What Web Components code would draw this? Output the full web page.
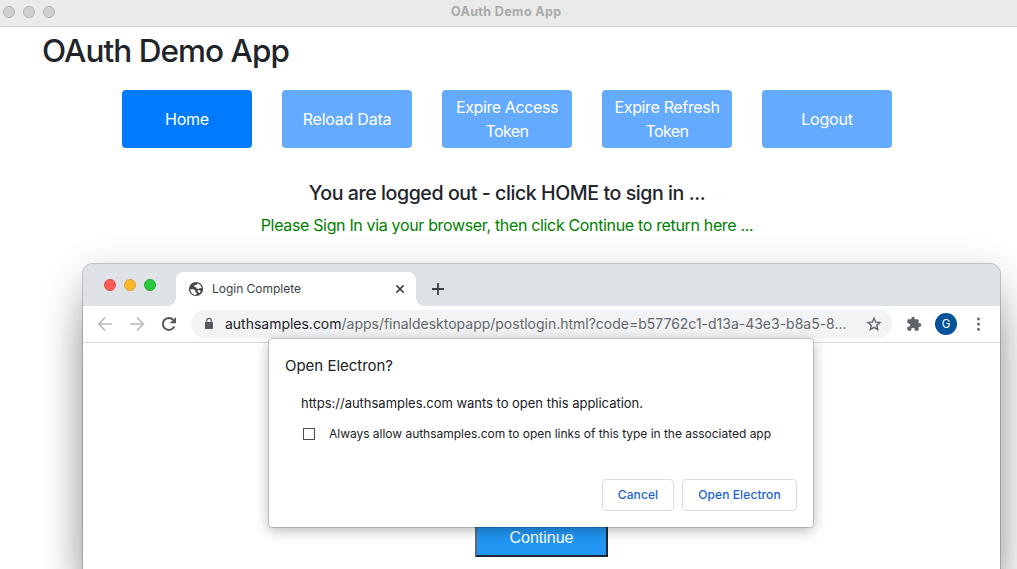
<!DOCTYPE html>
<html lang="en">
<head>
<meta charset="utf-8">
<title>OAuth Demo App</title>
<style>
html,body{margin:0;height:100%;overflow:hidden;background:#fff}
body{font-family:Inter,"Liberation Sans",sans-serif;color:#212529;position:relative}
</style>
</head>
<body>
<demo-app></demo-app>
<browser-window></browser-window>

<script>
const define = (name, html) => customElements.define(name, class extends HTMLElement {
  constructor() {
    super();
    const t = document.createElement('template');
    t.innerHTML = html;
    this.attachShadow({ mode: 'open' }).append(t.content.cloneNode(true));
  }
});

define('title-bar', `<style>
:host{display:flex;height:26px;background:#eaeaea;border-bottom:1px solid #d2d2d2;align-items:center;font-size:12.5px;font-weight:700;color:#a9a9a9}
.dots{display:flex;gap:8px;padding-left:3px;width:104px;box-sizing:border-box;align-self:flex-start;padding-top:6px}
i{width:12px;height:12px;box-sizing:border-box;border-radius:50%;background:#d0d0d0;border:1px solid #b4b4b4}
.name{flex:1;padding-left:347px;padding-bottom:3px;line-height:16px}
</style><div class="dots"><i></i><i></i><i></i></div><div class="name"><slot></slot></div>`);

define('nav-button', `<style>
:host{display:flex;width:130px;height:58px;border-radius:4px;background:#64aaff;color:#fff;font-size:16px;line-height:24px;flex-direction:column;align-items:center;justify-content:center}
:host([active]){background:#007bff}
</style><slot></slot>`);

define('demo-app', `<style>
:host{display:block}
h1{margin:0;padding:5px 0 0 42px;font-size:31.500px;line-height:38px;font-weight:500}
nav{display:flex;gap:30px;padding:20px 0 0 122px}
.status{padding:33px 3px 0 0;text-align:center}
.main{font-size:19.600px;font-weight:500;line-height:24px}
.hint{font-size:16px;line-height:24px;color:#008000;margin-top:8px}
</style>
<title-bar><text-run w="110.5">OAuth Demo App</text-run></title-bar>
<h1><text-run w="247">OAuth Demo App</text-run></h1>
<nav>
<nav-button active><text-run w="44">Home</text-run></nav-button>
<nav-button><text-run w="88.5">Reload Data</text-run></nav-button>
<nav-button><text-run w="102">Expire Access</text-run><text-run w="43">Token</text-run></nav-button>
<nav-button><text-run w="105">Expire Refresh</text-run><text-run w="43">Token</text-run></nav-button>
<nav-button><text-run w="51.5">Logout</text-run></nav-button>
</nav>
<div class="status">
<div class="main"><text-run w="396.5">You are logged out - click HOME to sign in ...</text-run></div>
<div class="hint"><text-run w="492.5">Please Sign In via your browser, then click Continue to return here ...</text-run></div>
</div>`);

define('browser-tab', `<style>
:host{display:flex;position:relative;box-sizing:border-box;width:240px;height:34px;background:#fff;border-radius:8px 8px 0 0;align-items:center;padding:0 11px 0 12px;font-size:12px;color:#3c4043}
:host::before,:host::after{content:"";position:absolute;bottom:0;width:8px;height:8px}
:host::before{left:-8px;background:radial-gradient(circle at 0 0,transparent 7.5px,#fff 8px)}
:host::after{right:-8px;background:radial-gradient(circle at 100% 0,transparent 7.5px,#fff 8px)}
svg{display:block}
.t{margin-left:8px;flex:1;line-height:16px}
</style>
<svg width="16" height="16" viewBox="0 0 16 16"><circle cx="8" cy="8" r="7.100" fill="#46494d"/><path d="M2.300 8.200l3.200.1 2 1.500-.2 1.400 1.600.5-.8 2.300C4.800 14 2.500 11.500 2.300 8.200zM9.800 2.500c2.300.7 3.700 2.500 3.900 4.800l-1.900-.4-1.200 1-2.100-.5-.7-1.400-1.700-.2.4-1.500 1.700-.3z" fill="#fff"/><path d="M9.500 9.500l2-.5 1.200 1.500-1.200 1.600-1.200-.9z" fill="#fff"/></svg>
<div class="t"><slot></slot></div>
<svg width="10" height="10" viewBox="0 0 10 10" stroke="#3c4043" stroke-width="1.600"><path d="M1.400 1.400l7.200 7.200M8.600 1.400L1.400 8.600"/></svg>`);

define('tab-strip', `<style>
:host{display:flex;height:42px;background:#dee1e6;align-items:flex-end}
.lights{display:flex;gap:8px;width:93px;padding:15px 0 0 21px;box-sizing:border-box;align-self:flex-start}
i{width:12px;height:12px;box-sizing:border-box;border-radius:50%;background:#fc5b57;border:1px solid #e2463f}
i:nth-child(2){background:#fdb92b;border-color:#dfa123}i:nth-child(3){background:#28c840;border-color:#1dad2b}
svg{margin:0 0 11px 16px}
</style><div class="lights"><i></i><i></i><i></i></div><slot></slot>
<svg width="12" height="12" viewBox="0 0 12 12" stroke="#3c4043" stroke-width="1.800"><path d="M6 0v12M0 6h12"/></svg>`);

define('tool-bar', `<style>
:host{display:flex;height:36px;border-bottom:1px solid #d9dbde;background:#fff;align-items:center;position:relative}
svg{display:block;flex:none}
.nav{display:flex;gap:12px;padding-left:12px;width:108px;box-sizing:border-box}
.url{display:flex;align-items:center;width:701px;height:28px;border-radius:14px;background:#f1f3f4;font-size:14px;color:#63676b;box-sizing:border-box;padding:0 10px 0 10px}
.text{flex:1;padding-left:8px;line-height:20px;white-space:nowrap;display:flex}
.host{color:#202124}
.puz{margin-left:14px}
.av{width:22px;height:22px;border-radius:50%;background:#03539b;color:#fff;font-size:11.5px;line-height:22px;text-align:center;margin-left:13px}
.menu{margin-left:16px}
</style>
<div class="nav">
<svg width="20" height="20" viewBox="0 0 20 20" fill="none" stroke="#b9bbbe" stroke-width="1.700"><path d="M17 10H4M10 3.700L3.700 10l6.300 6.300"/></svg>
<svg width="20" height="20" viewBox="0 0 20 20" fill="none" stroke="#b9bbbe" stroke-width="1.700"><path d="M3 10h13M10 3.700l6.300 6.300L10 16.300"/></svg>
<svg width="20" height="20" viewBox="0 0 20 20"><path d="M15.300 12.300A6 6 0 1 1 14.200 5.800" fill="none" stroke="#54585c" stroke-width="2"/><path d="M17 2.900v6.300h-6.300z" fill="#54585c"/></svg>
</div>
<div class="url">
<svg width="16" height="16" viewBox="0 0 16 16"><path d="M5.600 7V4.700a2.400 2.400 0 0 1 4.800 0V7" fill="none" stroke="#5f6368" stroke-width="1.200"/><rect x="4" y="6" width="8" height="7" rx=".8" fill="#55595d"/></svg>
<div class="text"><text-run class="host" w="116.5">authsamples.com</text-run><text-run w="505">/apps/finaldesktopapp/postlogin.html?code=b57762c1-d13a-43e3-b8a5-8...</text-run></div>
<svg width="16" height="16" viewBox="0 0 16 16"><path d="M8 2.300l1.700 3.900 4.200.4-3.200 2.800 1 4.100L8 11.300l-3.700 2.200 1-4.100-3.200-2.800 4.200-.4z" fill="none" stroke="#5f6368" stroke-width="1.400"/></svg>
</div>
<svg class="puz" width="16" height="16" viewBox="0 0 24 24"><path fill="#5f6368" d="M20.500 11H19V7c0-1.100-.9-2-2-2h-4V3.500a2.500 2.500 0 0 0-5 0V5H4c-1.100 0-1.990.9-1.990 2v3.800H3.500c1.490 0 2.700 1.210 2.700 2.700s-1.210 2.700-2.700 2.700H2V20c0 1.100.9 2 2 2h3.800v-1.500c0-1.490 1.210-2.700 2.700-2.700s2.700 1.210 2.700 2.700V22H17c1.100 0 2-.9 2-2v-4h1.500a2.500 2.500 0 0 0 0-5z"/></svg>
<div class="av">G</div>
<svg class="menu" width="12" height="16" viewBox="0 0 12 16" fill="#5f6368"><circle cx="5.500" cy="3" r="1.400"/><circle cx="5.500" cy="8.200" r="1.400"/><circle cx="5.500" cy="13.400" r="1.400"/></svg>`);

define('dialog-button', `<style>
:host{display:flex;box-sizing:border-box;height:32px;border:1px solid #dadce0;border-radius:4px;align-items:center;justify-content:center;font-size:12px;font-weight:500;color:#1a62d2;padding-bottom:2px}
</style><slot></slot>`);

define('open-dialog', `<style>
:host{display:block;position:absolute;z-index:2;left:186px;top:75px;width:544px;height:188px;background:#fff;border-radius:3px;color:#202124;box-shadow:0 0 0 1px rgba(0,0,0,.16),0 3px 14px rgba(0,0,0,.3)}
.h{padding:17px 0 0 16px;font-size:15px;line-height:20px}
.p{padding:17px 0 0 32px;font-size:13px;line-height:20px}
label{display:flex;align-items:center;padding:11px 0 0 34px;font-size:12px;line-height:20px}
b{width:12px;height:12px;box-sizing:border-box;border:1px solid #4b4e52;margin-right:14px}
.row{display:flex;justify-content:flex-end;gap:8px;padding:35px 16px 0 0}
</style>
<div class="h"><text-run w="108">Open Electron?</text-run></div>
<div class="p"><text-run w="342">https://authsamples.com wants to open this application.</text-run></div>
<label><b></b><text-run w="442">Always allow authsamples.com to open links of this type in the associated app</text-run></label>
<div class="row"><dialog-button style="width:72px"><text-run w="40.5">Cancel</text-run></dialog-button><dialog-button style="width:115px"><text-run w="82.5">Open Electron</text-run></dialog-button></div>`);

define('continue-button', `<style>
:host{display:flex;width:133px;height:39px;box-sizing:border-box;border:2px solid;border-color:#5f6a73 #1b2733 #1b2733 #5f6a73;background:#2196f3;color:#fff;font:16px "Liberation Sans",Arial,sans-serif;align-items:center;justify-content:center}
</style><slot></slot>`);

define('browser-window', `<style>
:host{display:block;position:absolute;left:83px;top:264px;width:917px;height:305px;border-radius:10px 10px 0 0;background:#fff;box-shadow:0 0 0 1px rgba(0,0,0,.2),0 12px 40px rgba(0,0,0,.24),0 50px 40px rgba(0,0,0,.26)}
.clip{border-radius:10px 10px 0 0;overflow:hidden}
.page{display:flex;justify-content:center;padding-top:175px}
</style>
<div class="clip"><tab-strip><browser-tab><text-run w="89">Login Complete</text-run></browser-tab></tab-strip><tool-bar></tool-bar></div>
<div class="page"><continue-button><text-run w="64">Continue</text-run></continue-button></div>
<open-dialog></open-dialog>`);

/* One line of text, tracked so that its advance equals the "w" attribute. */
customElements.define('text-run', class extends HTMLElement {
  connectedCallback() {
    if (this.shadowRoot) return;
    this.attachShadow({ mode: 'open' }).innerHTML =
      '<style>:host{display:inline-block;white-space:nowrap}</style><slot></slot>';
    const natural = this.getBoundingClientRect().width;
    const spacing = (Number(this.getAttribute('w')) - natural) / this.textContent.length;
    this.style.letterSpacing = spacing.toFixed(3) + 'px';
  }
});
</script>
</body>
</html>
